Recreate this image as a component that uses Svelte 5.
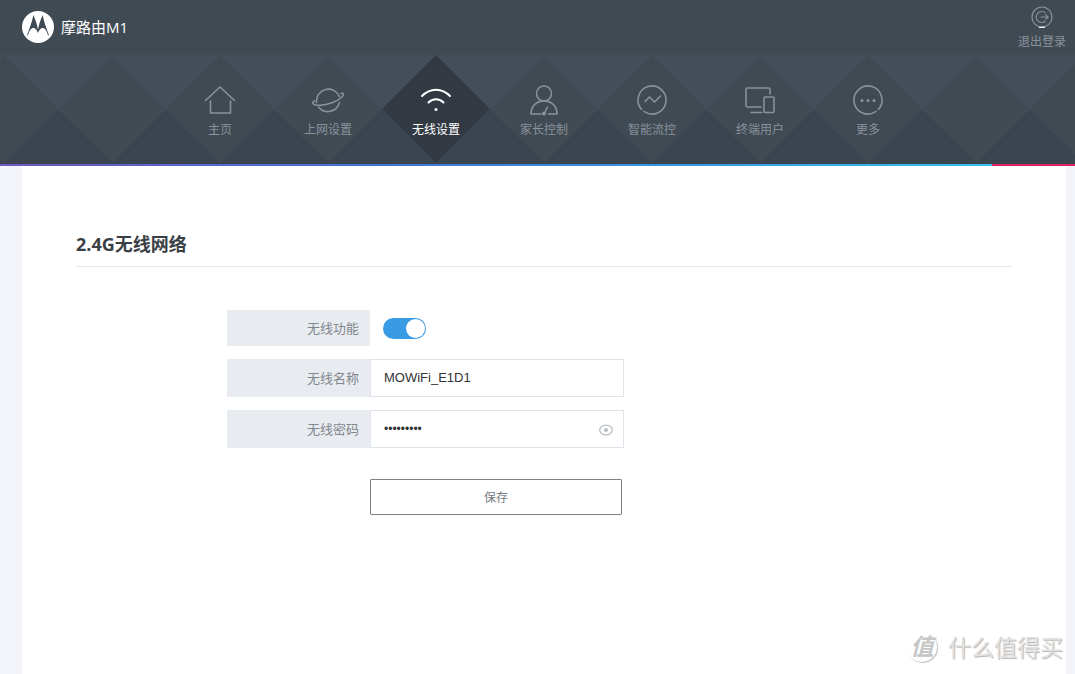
<script>
  const items = [
    { id: "home", label: "主页" },
    { id: "internet", label: "上网设置" },
    { id: "wifi", label: "无线设置" },
    { id: "parent", label: "家长控制" },
    { id: "traffic", label: "智能流控" },
    { id: "devices", label: "终端用户" },
    { id: "more", label: "更多" },
  ];

  let active = $state("wifi");
  let enabled = $state(true);
  let ssid = $state("MOWiFi_E1D1");
  let password = $state("motorola1");
  let showPassword = $state(false);

  function open(event, id) {
    event.preventDefault();
    active = id;
  }
</script>

<header>
  <div class="top">
    <div class="brand">
      <svg class="logo" viewBox="0 0 96 96" aria-hidden="true">
        <circle cx="48" cy="48" r="48" fill="#fff" />
        <path
          fill="#404a54"
          d="M15 73C22 54 30 34 34 12C41 28 45 40 48 56C51 40 55 28 62 12C66 34 74 54 81 73H78C74 58 68 51 62 51C56 51 51 57 48 66C45 57 40 51 34 51C28 51 22 58 18 73Z"
        />
      </svg>
      <span>摩路由M1</span>
    </div>
    <a class="logout" href="#logout">
      <svg viewBox="0 0 22 22" aria-hidden="true">
        <circle cx="11" cy="11" r="10" />
        <path d="M14.5 7a5.500 5.500 0 1 0 0 8M9.500 11h7.500M14.500 8.500l2.500 2.500-2.500 2.500" />
        <path class="shine" d="M8 21.300h6" />
      </svg>
      <span>退出登录</span>
    </a>
  </div>

  <nav>
    {#each items as item}
      <a
        href="#{item.id}"
        class:active={active === item.id}
        onclick={(e) => open(e, item.id)}
      >
        <svg viewBox="0 0 32 32" aria-hidden="true">
          {#if item.id === "home"}
            <path d="M1.500 16.500 16 3l14.500 13.500M6.500 17v12h20V17" />
          {:else if item.id === "internet"}
            <path d="M4.500 18.500A12 12 0 0 1 27.500 12.500M6.500 23A12 12 0 0 0 27.500 18.500" />
            <path d="M2.500 16.500C-1 19.500 1.500 21.500 8 21.300C16 21 25 17.500 29.500 13.500C32.500 10.500 31.500 8.500 29 9.500" />
          {:else if item.id === "wifi"}
            <path class="thick" d="M2 12c8-8.500 20-8.500 28 0M8.500 18.500c4-4.500 11-4.500 15 0" />
            <circle class="dot" cx="16" cy="25.500" r="1.500" />
          {:else if item.id === "parent"}
            <circle cx="16" cy="9.500" r="7.500" />
            <path d="M13 30H3C3 12.500 29 12.500 29 30H20.500M16.500 29l3-6" />
            <circle class="dot" cx="16" cy="29.500" r="2" />
          {:else if item.id === "traffic"}
            <path d="M7.970 27.470A14 14 0 1 0 5.600 25.370M9 17.500l4.500-4.500 5 5 6-6" />
          {:else if item.id === "devices"}
            <path d="M17 23H3.500Q2 23 2 21.500V5.500Q2 4 3.500 4H24.500Q26 4 26 5.500V10M7 28.500H18" />
            <rect x="20" y="13" width="10" height="15.500" rx="1" />
          {:else}
            <path d="M24.030 27.470A14 14 0 1 1 26.400 25.370" />
            <circle class="dot" cx="10" cy="16.500" r="1.500" />
            <circle class="dot" cx="16" cy="16.500" r="1.500" />
            <circle class="dot" cx="22" cy="16.500" r="1.500" />
          {/if}
        </svg>
        <span>{item.label}</span>
      </a>
    {/each}
  </nav>
  <div class="stripe"></div>
</header>

<main>
  <h1>2.4G无线网络</h1>

  <form onsubmit={(e) => e.preventDefault()}>
    <div class="row">
      <label for="enabled">无线功能</label>
      <input id="enabled" class="switch" type="checkbox" bind:checked={enabled} />
    </div>
    <div class="row">
      <label for="ssid">无线名称</label>
      <div class="field">
        <input id="ssid" type="text" bind:value={ssid} />
      </div>
    </div>
    <div class="row">
      <label for="password">无线密码</label>
      <div class="field">
        <input
          id="password"
          type={showPassword ? "text" : "password"}
          bind:value={password}
        />
        <button
          type="button"
          class="eye"
          aria-label="显示密码"
          onclick={() => (showPassword = !showPassword)}
        >
          <svg viewBox="0 0 14 12" aria-hidden="true">
            <ellipse cx="7" cy="6" rx="6.300" ry="4.800" />
            <circle cx="7" cy="6" r="2" />
          </svg>
        </button>
      </div>
    </div>
    <button class="save">保存</button>
  </form>

  <div class="watermark">
    <span class="seal">值</span>
    <span>什么值得买</span>
  </div>
</main>

<style>
  :global(body) {
    margin: 0;
    background: #f4f5fa;
    font-family: "Open Sans", "Noto Sans CJK SC", sans-serif;
    font-size: 12px;
  }

  :global(#app) {
    min-height: 100vh;
    display: flex;
    flex-direction: column;
  }

  header {
    background: #404a53;
  }

  .top {
    height: 55px;
    display: flex;
    justify-content: space-between;
    padding: 0 9px 0 22px;
    box-sizing: border-box;
  }

  .brand {
    display: flex;
    align-items: center;
    gap: 7px;
    height: 54px;
    color: #fff;
    font-size: 15px;
    line-height: 20px;
  }

  .logo {
    width: 32px;
    height: 32px;
  }

  .logout {
    display: flex;
    flex-direction: column;
    align-items: center;
    gap: 5px;
    padding-top: 6px;
    color: #89929c;
    line-height: 18px;
    text-decoration: none;
  }

  .logout svg {
    width: 22px;
    height: 22px;
    fill: none;
    stroke: #89929c;
    stroke-width: 1.2;
  }

  .logout .shine {
    stroke: #fff;
  }

  nav {
    height: 109px;
    display: flex;
    padding-left: 166px;
    background: #3b4550
      conic-gradient(
        from -45deg,
        #444e5a 90deg,
        #404a53 0 180deg,
        #3b4550 0 270deg,
        #404a53 0
      )
      4px 0 / 108px 108px repeat-x;
  }

  nav a {
    width: 108px;
    height: 108px;
    display: flex;
    flex-direction: column;
    align-items: center;
    gap: 5px;
    padding-top: 29px;
    box-sizing: border-box;
    color: #89929c;
    line-height: 18px;
    text-decoration: none;
  }

  nav a.active {
    color: #fff;
    background: #323943;
    clip-path: polygon(50% 0, 100% 50%, 50% 100%, 0 50%);
  }

  nav svg {
    width: 32px;
    height: 32px;
    fill: none;
    stroke: currentColor;
    stroke-width: 1.6;
    stroke-linecap: round;
    stroke-linejoin: round;
  }

  nav .thick {
    stroke-width: 2;
  }

  nav .dot {
    fill: currentColor;
    stroke: none;
  }

  .stripe {
    height: 2px;
    background: linear-gradient(
      to right,
      #7058c0,
      #4174d4 35%,
      #3890dc 57%,
      #36bff0 calc(100% - 83px),
      #e0215f calc(100% - 83px)
    );
  }

  main {
    position: relative;
    flex: 1;
    margin: 0 9px 0 22px;
    padding: 64px 54px 0;
    background: #fff;
  }

  h1 {
    margin: 0;
    padding-bottom: 8px;
    border-bottom: 1px solid #e6e8ee;
    color: #3a3f46;
    font-size: 18px;
    line-height: 28px;
  }

  form {
    display: flex;
    flex-direction: column;
    gap: 13px;
    margin: 43px 0 0 151px;
  }

  .row {
    display: flex;
    align-items: center;
  }

  label {
    width: 143px;
    padding-right: 11px;
    box-sizing: border-box;
    background: #e8ecf1;
    color: #82878d;
    font-size: 13px;
    line-height: 36px;
    text-align: right;
  }

  .row:not(:first-child) label {
    line-height: 38px;
  }

  .switch {
    appearance: none;
    display: flex;
    width: 43px;
    height: 21px;
    margin: 0 0 0 13px;
    padding: 1px;
    box-sizing: border-box;
    border-radius: 11px;
    background: #c5cbd3;
    cursor: pointer;
  }

  .switch::before {
    content: "";
    width: 19px;
    height: 19px;
    border-radius: 50%;
    background: #fff;
  }

  .switch:checked {
    justify-content: flex-end;
    background: #399be3;
  }

  .field {
    display: flex;
    align-items: center;
    width: 254px;
    height: 38px;
    padding: 0 10px 0 13px;
    box-sizing: border-box;
    border: 1px solid #dfe3ea;
  }

  .field input {
    flex: 1;
    min-width: 0;
    padding: 0 0 2px;
    border: 0;
    outline: none;
    background: none;
    color: #333;
    font-family: "Liberation Sans", sans-serif;
    font-size: 13px;
  }

  .field input[type="password"] {
    padding: 0;
    font-size: 12px;
  }

  .eye {
    display: flex;
    padding: 2px 0 0;
    border: 0;
    background: none;
    cursor: pointer;
  }

  .eye svg {
    width: 14px;
    height: 12px;
    fill: none;
    stroke: #b9bdc6;
    stroke-width: 1.3;
  }

  .eye circle {
    fill: #b9bdc6;
    stroke: none;
  }

  .save {
    width: 252px;
    height: 36px;
    margin: 18px 0 0 143px;
    border: 1px solid #7d8289;
    border-radius: 1px;
    background: #fff;
    color: #74797f;
    font-family: inherit;
    font-size: 12px;
    cursor: pointer;
  }

  .watermark {
    position: absolute;
    right: 3px;
    bottom: 11px;
    display: flex;
    align-items: center;
    gap: 11px;
    color: #e2e2e2;
    font-size: 23px;
    line-height: 32px;
    text-shadow: 1px 1px 1px #b4b4b4;
    pointer-events: none;
  }

  .seal {
    width: 30px;
    height: 30px;
    border-radius: 50%;
    box-shadow: 1px 1px 1px #c0c0c0;
    color: #c6c6c6;
    font-weight: bold;
    line-height: 28px;
    text-align: center;
    text-shadow: none;
    font-style: italic;
  }
</style>
